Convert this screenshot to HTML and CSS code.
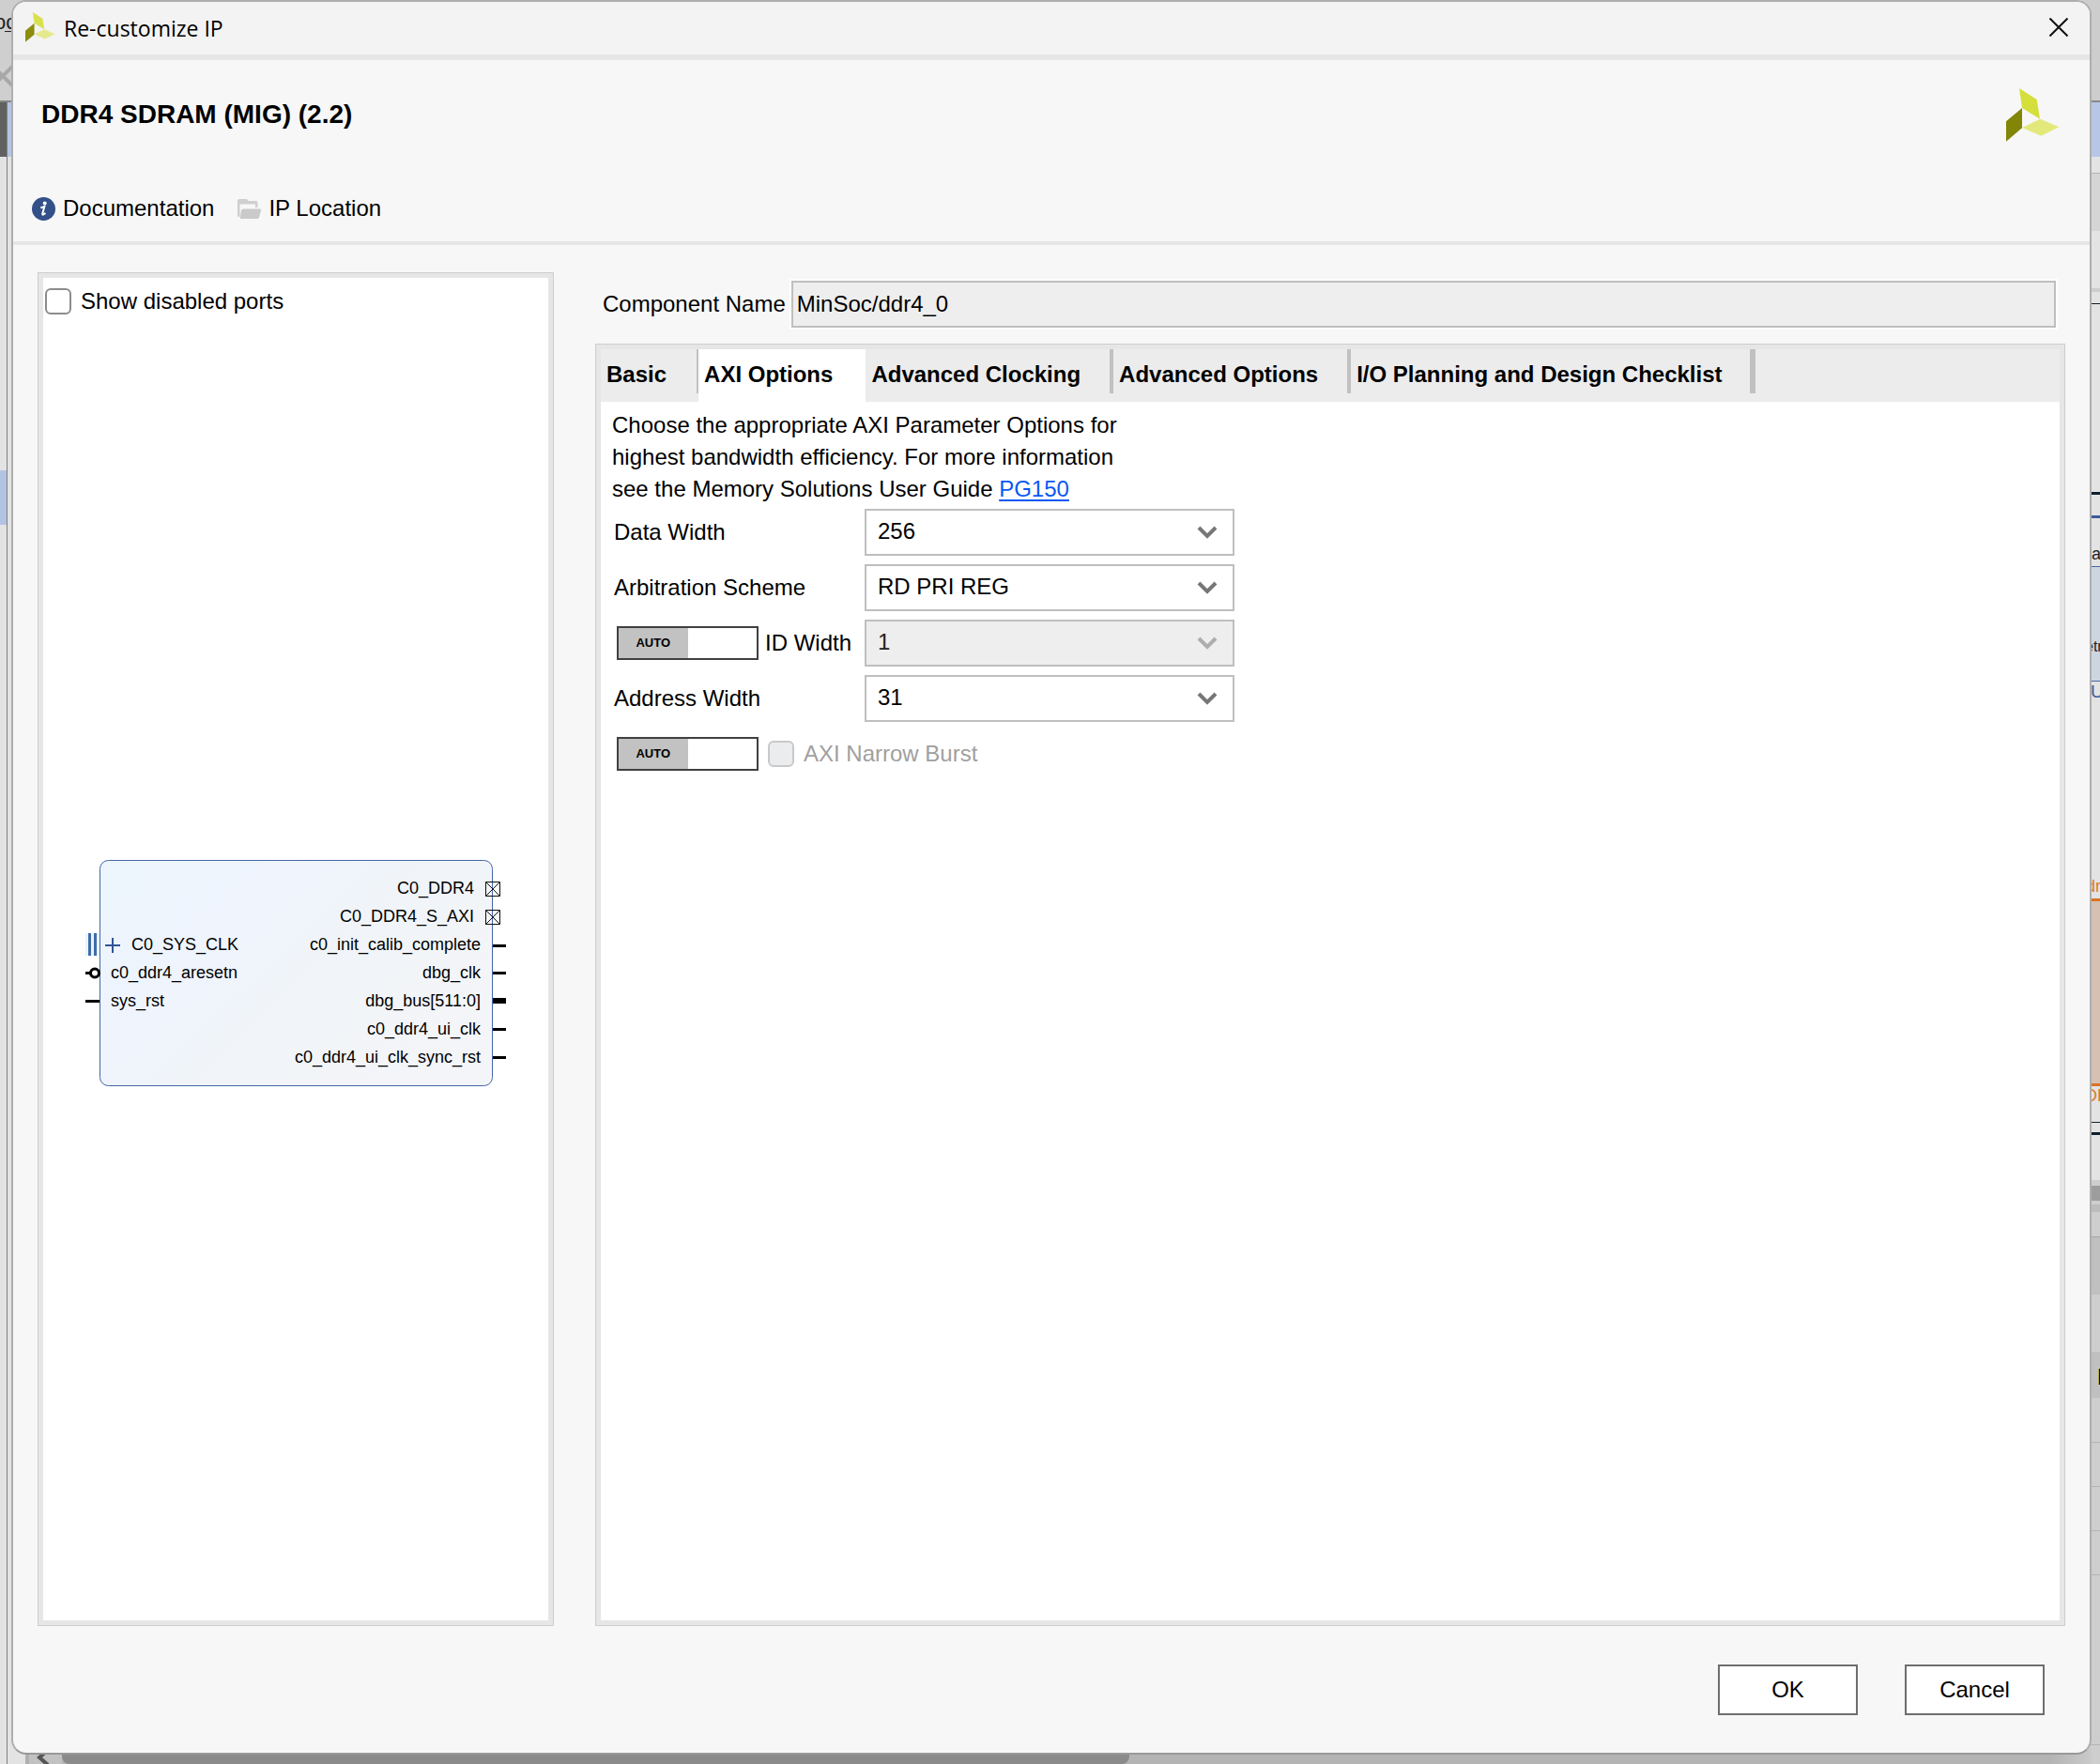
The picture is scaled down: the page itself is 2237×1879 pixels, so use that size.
FILE: index.html
```html
<!DOCTYPE html>
<html lang="en">
<head>
<meta charset="utf-8">
<title>Re-customize IP</title>
<link rel="stylesheet" href="styles.css">
</head>
<body>
<!-- Main window showing round the edges of the dialog -->
<div class="backdrop" aria-hidden="true">
  <svg class="edge-left" width="40" height="1879">
    <rect width="40" height="107" fill="#cfcfcf"/>
    <text x="-6" y="31" font-size="22" fill="#222">oc</text>
    <path d="M5 33.500H20" stroke="#222"/>
    <path d="M-9 69L15 93M-9 93L15 69" stroke="#a8a8a8" stroke-width="4"/>
    <rect y="107" width="40" height="2" fill="#858585"/>
    <rect y="109" width="7" height="58" fill="#616161"/>
    <rect x="8" y="109" width="32" height="58" fill="#b5c4e4"/>
    <rect y="501" width="7" height="58" fill="#b3c3e2"/>
    <rect x="7" y="109" width="1" height="1770" fill="#808080"/>
  </svg>
  <svg class="edge-right" width="20" height="1879">
    <rect width="20" height="107" fill="#cdcdcd"/>
    <rect y="107" width="20" height="2" fill="#888"/>
    <rect y="109" width="20" height="58" fill="#b7c6e6"/>
    <rect y="184" width="20" height="62" fill="#d5d5d5"/>
    <rect y="184" width="20" height="1" fill="#b4b4b4"/>
    <rect y="307" width="20" height="4" fill="#cdcdcd"/>
    <rect y="323" width="20" height="1" fill="#10202c"/>
    <rect y="524" width="20" height="3" fill="#0f1f30"/>
    <rect y="549" width="20" height="3" fill="#3d5a98"/>
    <rect y="603" width="20" height="123" fill="#cdd6e0"/>
    <path d="M0 603.500H20M0 725.500H20" stroke="#4a66a0"/>
    <text x="1" y="596" font-size="18" fill="#222">na</text>
    <text x="4" y="694" font-size="16" fill="#222">etr</text>
    <text x="10" y="743" font-size="19" fill="#3d5a98">U</text>
    <text x="5" y="950" font-size="18" fill="#dd7a30">dr</text>
    <rect y="957" width="20" height="199" fill="#d5c0b2"/>
    <rect y="957" width="20" height="3" fill="#dc7225"/>
    <rect y="1154" width="20" height="3" fill="#dc7225"/>
    <text x="4" y="1173" font-size="18" fill="#dd7a30">DR</text>
    <rect y="1195" width="20" height="1" fill="#10202c"/>
    <rect y="1206" width="20" height="3" fill="#0f1f30"/>
    <rect y="1257" width="20" height="622" fill="#cecece"/>
    <rect y="1263" width="20" height="16" fill="#9d9d9d"/>
    <rect y="1283" width="20" height="8" fill="#bcbcbc"/>
    <rect y="1317" width="20" height="62" fill="#c0c0c0"/>
    <rect y="1317" width="20" height="1" fill="#a6a6a6"/>
    <rect y="1440" width="20" height="49" fill="#c0c0c0"/>
    <rect x="18" y="1458" width="1" height="17" fill="#b3a83a"/>
    <rect x="19" y="1458" width="1" height="17" fill="#1c0808"/>
    <path d="M0 1536.500H20M0 1583.500H20M0 1630.500H20M0 1677.500H20M0 1858.500H20" stroke="#b4b4b4"/>
  </svg>
  <div class="scrollbar">
    <svg class="scroll-arrow" width="14" height="18"><path d="M12 1L3 9L12 17" fill="none" stroke="#555" stroke-width="4"/></svg>
    <div class="scroll-thumb"></div>
  </div>
</div>

<main class="dialog" role="dialog" aria-labelledby="dialog-title">
  <div class="titlebar">
    <svg class="title-logo" width="32" height="32" viewBox="0 0 57 57" aria-hidden="true">
      <path d="M14 0L32.700 12L36 32.700L17 21Z" fill="#d9e04f"/>
      <path d="M17 21V42.300L0 56.700V35.300Z" fill="#8b8d0b"/>
      <path d="M17 42L36.300 32.700L56.300 41.300L37.300 50.700Z" fill="#e5e98e"/>
    </svg>
    <span class="title-text" id="dialog-title">Re-customize IP</span>
    <button class="close" type="button" aria-label="Close">
      <svg width="20" height="20" viewBox="0 0 20 20"><path d="M0.500 0.500L19.500 19.500M19.500 0.500L0.500 19.500" stroke="#111" stroke-width="2"/></svg>
    </button>
  </div>

  <header class="header">
    <div class="header-top">
      <h1 class="heading">DDR4 SDRAM (MIG) (2.2)</h1>
      <svg width="57" height="57" viewBox="0 0 57 57" aria-hidden="true">
        <path d="M14 0L32.700 12L36 32.700L17 21Z" fill="#d5df3b"/>
        <path d="M17 21V42.300L0 56.700V35.300Z" fill="#838507"/>
        <path d="M17 42L36.300 32.700L56.300 41.300L37.300 50.700Z" fill="#e2e97a"/>
      </svg>
    </div>
    <div class="toolbar">
      <button class="tool" type="button">
        <svg width="25" height="25" viewBox="0 0 25 25" aria-hidden="true">
          <circle cx="12.500" cy="12.500" r="12.500" fill="#335088"/>
          <circle cx="13.700" cy="6.600" r="2" fill="#fff"/>
          <path d="M9.300 11.200Q11.500 10.800 13.300 10L11.300 17.600Q11 19 12 18.600Q13 18.200 14.500 17" fill="none" stroke="#fff" stroke-width="2"/>
        </svg>
        Documentation
      </button>
      <button class="tool" type="button">
        <svg width="25" height="21" viewBox="0 0 25 21" aria-hidden="true">
          <path d="M0 2Q0 0 2 0H9Q11 0 11.500 2H20Q21.500 2 21.500 4V9H19V5.500H2.500V18L1.500 19.500Q0 19 0 17.500Z" fill="#cfcfcf"/>
          <path d="M4 12Q4.500 10.500 6 10.500H24Q25.300 10.500 25 12L23 19.500Q22.500 21 21 21H3.500Q2.500 21 3 19Z" fill="#cacaca"/>
        </svg>
        IP Location
      </button>
    </div>
  </header>

  <div class="content">
    <section class="panel ports">
      <label class="check"><input class="checkbox" type="checkbox">Show disabled ports</label>
      <div class="diagram">
        <svg width="450" height="243" viewBox="0 0 450 243" role="img" aria-label="IP symbol">
          <defs>
            <linearGradient id="block" x1="0" y1="0" x2="1" y2="0.600">
              <stop offset="0" stop-color="#ecf5fd"/>
              <stop offset="0.400" stop-color="#eff4fd"/>
              <stop offset="0.600" stop-color="#f0f4f8"/>
              <stop offset="1" stop-color="#f4f5f8"/>
            </linearGradient>
          </defs>
          <rect x="1" y="79" width="15" height="24" fill="#e9f3fc"/>
          <rect x="16.500" y="1.500" width="418" height="240" rx="9" fill="url(#block)" stroke="#4467a6"/>
          <path d="M5.500 79V103M11.500 79V103" stroke="#3f6ea5" stroke-width="3"/>
          <path d="M22 92H38M30 84V100" stroke="#2f5596" stroke-width="2"/>
          <path d="M1 121.500H6" stroke="#000" stroke-width="3"/>
          <circle cx="11" cy="121.500" r="4.500" fill="#fff" stroke="#000" stroke-width="3"/>
          <path d="M1 151.500H16M435 92.500H449M435 121.500H449M435 181.500H449M435 211.500H449" stroke="#000" stroke-width="3"/>
          <path d="M435 151H449" stroke="#000" stroke-width="6"/>
          <path d="M427.500 24.500H442.500V39.500H427.500ZL442.500 39.500M442.500 24.500L427.500 39.500M427.500 54.500H442.500V69.500H427.500ZL442.500 69.500M442.500 54.500L427.500 69.500" fill="none" stroke="#111"/>
          <g class="pin-left">
            <text x="50" y="97">C0_SYS_CLK</text>
            <text x="28" y="127">c0_ddr4_aresetn</text>
            <text x="28" y="157">sys_rst</text>
          </g>
          <g class="pin-right">
            <text x="415" y="37">C0_DDR4</text>
            <text x="415" y="67">C0_DDR4_S_AXI</text>
            <text x="422" y="97">c0_init_calib_complete</text>
            <text x="422" y="127">dbg_clk</text>
            <text x="422" y="157">dbg_bus[511:0]</text>
            <text x="422" y="187">c0_ddr4_ui_clk</text>
            <text x="422" y="217">c0_ddr4_ui_clk_sync_rst</text>
          </g>
        </svg>
      </div>
    </section>

    <section class="settings">
      <div class="name-row">
        <label for="component-name">Component Name</label>
        <input class="name-input" id="component-name" type="text" value="MinSoc/ddr4_0" readonly>
      </div>
      <div class="panel tab-panel">
        <div class="tabs" role="tablist">
          <button class="tab" type="button" role="tab">Basic</button>
          <button class="tab tab-active" type="button" role="tab" aria-selected="true">AXI Options</button>
          <button class="tab" type="button" role="tab">Advanced Clocking</button>
          <button class="tab" type="button" role="tab">Advanced Options</button>
          <button class="tab" type="button" role="tab">I/O Planning and Design Checklist</button>
        </div>
        <div class="tab-body" role="tabpanel">
          <p class="intro">Choose the appropriate AXI Parameter Options for<br>highest bandwidth efficiency. For more information<br>see the Memory Solutions User Guide <a class="link" href="#pg150">PG150</a></p>
          <div class="form">
            <label for="data-width">Data Width</label>
            <div class="select-wrap">
              <select class="select" id="data-width"><option>256</option></select>
              <svg class="chevron" width="22" height="14" viewBox="0 0 22 14"><path d="M2 2L11 11L20 2" fill="none" stroke="currentColor" stroke-width="4"/></svg>
            </div>
            <label for="arbitration">Arbitration Scheme</label>
            <div class="select-wrap">
              <select class="select" id="arbitration"><option>RD PRI REG</option></select>
              <svg class="chevron" width="22" height="14" viewBox="0 0 22 14"><path d="M2 2L11 11L20 2" fill="none" stroke="currentColor" stroke-width="4"/></svg>
            </div>
            <div class="auto-row">
              <button class="toggle" type="button" aria-label="ID Width auto"><span class="toggle-on">AUTO</span></button>
              <label for="id-width">ID Width</label>
            </div>
            <div class="select-wrap">
              <select class="select" id="id-width" disabled><option>1</option></select>
              <svg class="chevron chevron-off" width="22" height="14" viewBox="0 0 22 14"><path d="M2 2L11 11L20 2" fill="none" stroke="currentColor" stroke-width="4"/></svg>
            </div>
            <label for="address-width">Address Width</label>
            <div class="select-wrap">
              <select class="select" id="address-width"><option>31</option></select>
              <svg class="chevron" width="22" height="14" viewBox="0 0 22 14"><path d="M2 2L11 11L20 2" fill="none" stroke="currentColor" stroke-width="4"/></svg>
            </div>
            <div class="auto-row auto-row-wide">
              <button class="toggle" type="button" aria-label="AXI Narrow Burst auto"><span class="toggle-on">AUTO</span></button>
              <label class="check check-off"><input class="checkbox" type="checkbox" disabled>AXI Narrow Burst</label>
            </div>
          </div>
        </div>
      </div>
    </section>
  </div>

  <footer class="footer">
    <button class="button" type="button">OK</button>
    <button class="button" type="button">Cancel</button>
  </footer>
</main>
</body>
</html>
```
FILE: styles.css
```css
* {
  box-sizing: border-box;
}

body {
  position: relative;
  display: flex;
  min-height: 100vh;
  margin: 0;
  padding: 0 9px 10px 12px;
  background: #e3e3e3;
  color: #000;
  font: 24px/28px "Liberation Sans", Arial, sans-serif;
}

button,
input,
select {
  margin: 0;
  color: inherit;
  font: inherit;
}

button {
  padding: 0;
  border: 0;
  background: none;
}

svg {
  display: block;
  flex: none;
}

/* Main window behind the dialog */
.backdrop {
  position: absolute;
  inset: 0;
  overflow: hidden;
}

.edge-left {
  position: absolute;
  top: 0;
  left: 0;
}

.edge-right {
  position: absolute;
  top: 0;
  right: 0;
}

.scrollbar {
  position: absolute;
  right: 9px;
  bottom: 0;
  left: 27px;
  display: flex;
  align-items: flex-end;
  height: 16px;
  overflow: hidden;
  border-left: 4px solid #b0b0b0;
  background: linear-gradient(to right, #b4b4b4 98%, #cacaca);
}

.scroll-arrow {
  width: 35px;
  height: 16px;
  padding-left: 8px;
  background: #c2c2c2;
}

.scroll-thumb {
  flex: 0 0 1137px;
  height: 16px;
  border-radius: 0 0 8px 8px;
  background: #8b8b8b;
}

/* Dialog frame */
.dialog {
  position: relative;
  display: flex;
  flex: 1;
  flex-direction: column;
  overflow: hidden;
  border: 2px solid #aeaeae;
  border-bottom-color: #999;
  border-radius: 16px;
  background: #f7f7f7;
}

.titlebar {
  display: flex;
  align-items: center;
  height: 62px;
  padding: 0 23px 2px 13px;
  border-bottom: 6px solid #e6e6e6;
  background: #f3f3f3;
}

.title-text {
  flex: 1;
  margin-left: 9px;
  padding-top: 2px;
  font: 23px/28px "Open Sans", "Noto Sans", sans-serif;
}

.header {
  display: flex;
  flex-direction: column;
  gap: 56px;
  padding: 30px 32px 20px 20px;
  border-bottom: 4px solid #e6e6e6;
}

.header-top {
  display: flex;
  align-items: center;
  justify-content: space-between;
  padding-left: 10px;
}

.heading {
  margin: 0;
  padding-bottom: 2px;
  font-size: 28px;
  line-height: 32px;
}

.toolbar {
  display: flex;
  gap: 25px;
}

.tool {
  display: flex;
  align-items: center;
  gap: 8px;
  height: 30px;
}

.content {
  display: flex;
  flex: 1;
  gap: 44px;
  padding: 29px 26px 0;
}

.panel {
  display: flex;
  flex-direction: column;
  padding: 5px;
  border: 1px solid #cdcdcd;
  outline: 5px solid #e6e6e6;
  outline-offset: -6px;
  background: #fff;
}

/* Ports panel */
.ports {
  width: 550px;
}

.check {
  display: flex;
  align-items: center;
  gap: 10px;
}

.ports .check {
  height: 50px;
  padding-left: 2px;
}

.checkbox {
  appearance: none;
  width: 28px;
  height: 28px;
  border: 2px solid #8c8c8c;
  border-radius: 6px;
  background: #fff;
}

.checkbox:disabled {
  border-color: #c9c9c9;
  background: #ebecee;
}

.check-off {
  color: #a0a0a0;
}

.diagram {
  display: flex;
  flex: 1;
  align-items: center;
  justify-content: center;
  font-size: 18px;
}

.pin-right {
  text-anchor: end;
}

/* Settings */
.settings {
  display: flex;
  flex: 1;
  flex-direction: column;
  gap: 17px;
}

.name-row {
  display: flex;
  align-items: center;
  gap: 6px;
  padding: 9px 10px 0 8px;
}

.name-input {
  flex: 1;
  height: 50px;
  padding: 0 4px;
  border: 2px solid #bfbfbf;
  box-shadow: 0 0 0 2px #fff;
  background: #eee;
}

.tab-panel {
  flex: 1;
}

.tabs {
  display: flex;
  height: 56px;
  background: #ececec;
}

.tab {
  padding: 0 35px 2px 6px;
  background: linear-gradient(#c1c1c1, #c1c1c1) no-repeat right top / 4px 47px;
  font-weight: bold;
}

.tab:first-child {
  padding-right: 34px;
  background-size: 2px 47px;
}

.tab:last-child {
  background-size: 6px 47px;
}

.tab-active {
  background: #fff;
}

.tab-body {
  padding: 8px 12px;
}

.intro {
  margin: 0 0 4px;
  line-height: 34px;
}

.link {
  color: #0b57f5;
  text-underline-offset: 3px;
}

.form {
  display: grid;
  grid-template-columns: 267px 394px;
  grid-auto-rows: 50px;
  row-gap: 9px;
  align-items: center;
  padding-left: 2px;
}

.select-wrap {
  display: grid;
  align-items: center;
}

.select {
  grid-area: 1 / 1;
  appearance: none;
  height: 50px;
  padding: 0 12px 2px;
  border: 2px solid #bfbfbf;
  border-radius: 0;
  background: #fff;
}

.select:disabled {
  background: #eee;
  color: #222;
  opacity: 1;
}

.chevron {
  grid-area: 1 / 1;
  justify-self: end;
  margin-right: 18px;
  color: #777;
  pointer-events: none;
}

.chevron-off {
  color: #adadad;
}

.auto-row {
  display: flex;
  align-items: center;
  gap: 7px;
  padding-left: 3px;
}

.auto-row-wide {
  grid-column: 1 / -1;
  gap: 10px;
}

.toggle {
  width: 151px;
  height: 36px;
  border: 2px solid #404040;
  background: #fff;
}

.toggle-on {
  display: block;
  width: 50%;
  height: 32px;
  background: #c2c2c2;
  font-size: 13px;
  font-weight: bold;
  line-height: 32px;
}

.footer {
  display: flex;
  justify-content: flex-end;
  gap: 50px;
  padding: 41px 48px 40px;
}

.button {
  width: 149px;
  height: 54px;
  border: 2px solid #6e6e6e;
  background: #fff;
}
```
